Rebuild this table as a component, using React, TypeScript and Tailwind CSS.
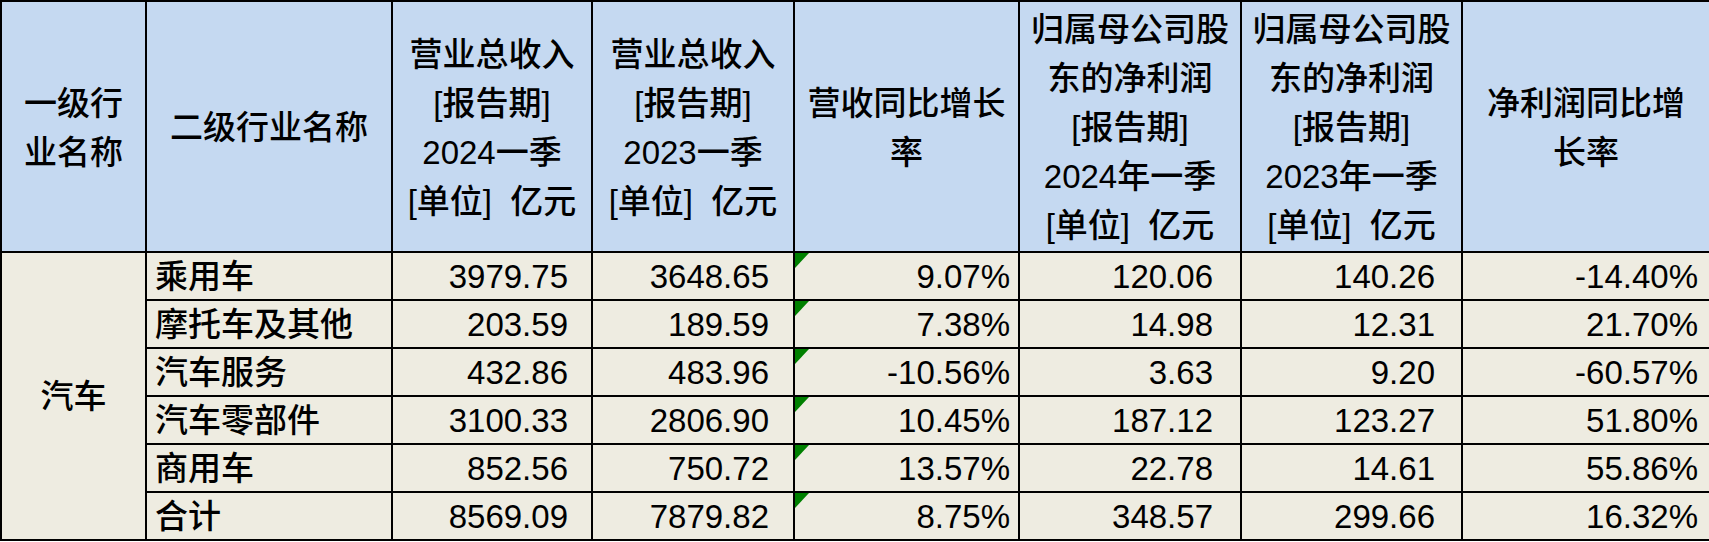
const headers: string[][] = [
  ["一级行", "业名称"],
  ["二级行业名称"],
  ["营业总收入", "[报告期]", "2024一季", "[单位]\u00a0\u00a0亿元"],
  ["营业总收入", "[报告期]", "2023一季", "[单位]\u00a0\u00a0亿元"],
  ["营收同比增长", "率"],
  ["归属母公司股", "东的净利润", "[报告期]", "2024年一季", "[单位]\u00a0\u00a0亿元"],
  ["归属母公司股", "东的净利润", "[报告期]", "2023年一季", "[单位]\u00a0\u00a0亿元"],
  ["净利润同比增", "长率"],
];

const rows: string[][] = [
  ["乘用车", "3979.75", "3648.65", "9.07%", "120.06", "140.26", "-14.40%"],
  ["摩托车及其他", "203.59", "189.59", "7.38%", "14.98", "12.31", "21.70%"],
  ["汽车服务", "432.86", "483.96", "-10.56%", "3.63", "9.20", "-60.57%"],
  ["汽车零部件", "3100.33", "2806.90", "10.45%", "187.12", "123.27", "51.80%"],
  ["商用车", "852.56", "750.72", "13.57%", "22.78", "14.61", "55.86%"],
  ["合计", "8569.09", "7879.82", "8.75%", "348.57", "299.66", "16.32%"],
];

// right padding of the numeric columns (cols 3..8)
const numPad = ["pr-[23px]", "pr-[24px]", "pr-[8px]", "pr-[27px]", "pr-[26px]", "pr-[11px]"];

const cell = "border-2 border-black";

export default function App() {
  return (
    <div className="w-[1709px] h-[542px] bg-white overflow-hidden font-['Liberation_Sans','Noto_Sans_CJK_SC',sans-serif] font-medium text-black">
      <table className="table-fixed border-collapse w-[1709px]">
        <colgroup>
          <col className="w-[145px]" />
          <col className="w-[246px]" />
          <col className="w-[200px]" />
          <col className="w-[202px]" />
          <col className="w-[225px]" />
          <col className="w-[222px]" />
          <col className="w-[221px]" />
          <col className="w-[248px]" />
        </colgroup>
        <thead>
          <tr className="h-[251px]">
            {headers.map((lines, i) => (
              <th
                key={i}
                className={`${cell} bg-[#c5d9f1] p-0 pt-[2px] text-center align-middle font-medium text-[33px] leading-[49px] whitespace-nowrap`}
              >
                {lines.map((l, j) => (
                  <div key={j}>{l}</div>
                ))}
              </th>
            ))}
          </tr>
        </thead>
        <tbody>
          {rows.map((r, ri) => (
            <tr key={ri} className="h-[48px]">
              {ri === 0 && (
                <td
                  rowSpan={rows.length}
                  className={`${cell} bg-[#eeece1] p-0 text-center align-middle text-[33px] leading-none`}
                >
                  汽车
                </td>
              )}
              <td className={`${cell} bg-[#eeece1] p-0 pl-[8px] text-left align-middle text-[33px] leading-none whitespace-nowrap`}>
                {r[0]}
              </td>
              {r.slice(1).map((v, ci) => (
                <td
                  key={ci}
                  className={`${cell} relative bg-[#eeece1] p-0 ${numPad[ci]} text-right align-middle text-[33px] leading-none whitespace-nowrap`}
                >
                  {ci === 2 && (
                    <span className="absolute left-0 top-0 h-0 w-0 border-t-[15px] border-r-[14px] border-t-[#008000] border-r-transparent" />
                  )}
                  {v}
                </td>
              ))}
            </tr>
          ))}
        </tbody>
      </table>
    </div>
  );
}
